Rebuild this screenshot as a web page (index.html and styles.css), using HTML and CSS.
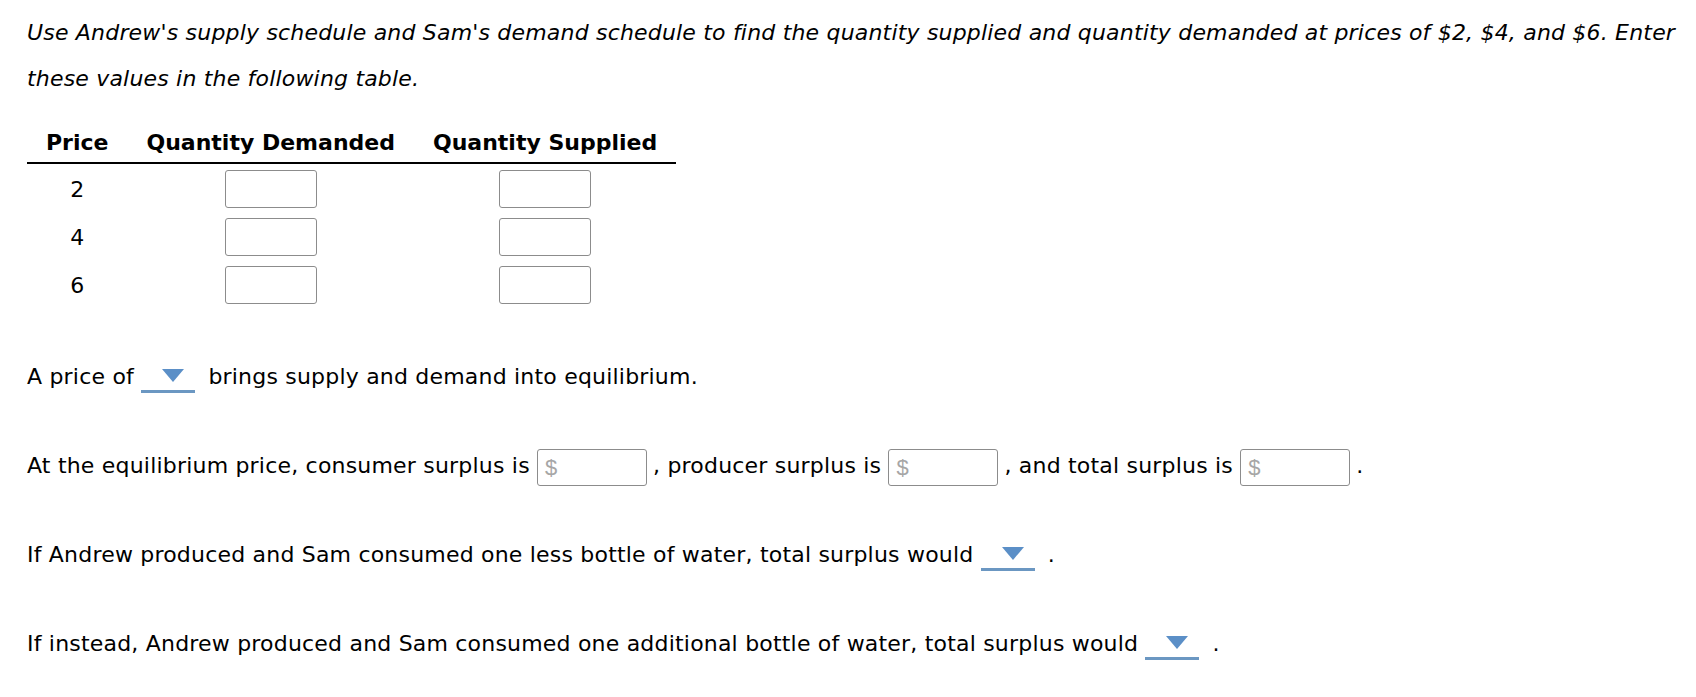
FILE: index.html
```html
<!DOCTYPE html>
<html lang="en">
<head>
<meta charset="utf-8">
<title>Supply and demand</title>
<link rel="stylesheet" href="styles.css">
</head>
<body>
<div class="page">
  <p class="intro">Use Andrew's supply schedule and Sam's demand schedule to find the quantity supplied and quantity demanded at prices of $2, $4, and $6. Enter these values in the following table.</p>

  <table class="schedule">
    <thead>
      <tr><th>Price</th><th>Quantity Demanded</th><th>Quantity Supplied</th></tr>
    </thead>
    <tbody>
      <tr><td>2</td><td><span class="box"></span></td><td><span class="box"></span></td></tr>
      <tr><td>4</td><td><span class="box"></span></td><td><span class="box"></span></td></tr>
      <tr><td>6</td><td><span class="box"></span></td><td><span class="box"></span></td></tr>
    </tbody>
  </table>

  <p class="q q-first">A price of <span class="dd"><span class="tri"></span></span> brings supply and demand into equilibrium.</p>

  <p class="q">At the equilibrium price, consumer surplus is <span class="money"><span class="cur">$</span></span>, producer surplus is <span class="money"><span class="cur">$</span></span>, and total surplus is <span class="money"><span class="cur">$</span></span>.</p>

  <p class="q">If Andrew produced and Sam consumed one less bottle of water, total surplus would <span class="dd"><span class="tri"></span></span> .</p>

  <p class="q">If instead, Andrew produced and Sam consumed one additional bottle of water, total surplus would <span class="dd"><span class="tri"></span></span> .</p>
</div>
</body>
</html>
```
FILE: styles.css
```css
html, body {
  margin: 0;
  padding: 0;
  background: #fff;
}
body {
  font-family: "DejaVu Sans", Verdana, sans-serif;
  font-size: 22px;
  color: #000;
}
.page {
  padding: 10px 0 0 27px;
}
.intro {
  margin: 0;
  font-style: italic;
  line-height: 46px;
  letter-spacing: 0.19px;
}
.schedule {
  margin-top: 22px;
  border-collapse: collapse;
}
.schedule th {
  font-weight: bold;
  padding: 0 19px;
  height: 38px;
  line-height: 38px;
  border-bottom: 2px solid #000;
  text-align: center;
  white-space: nowrap;
}
.schedule td {
  padding: 0 19px;
  height: 48px;
  text-align: center;
  vertical-align: middle;
}
.schedule tbody tr:first-child td {
  padding-top: 1px;
}
.box {
  display: inline-block;
  width: 90px;
  height: 36px;
  border: 1px solid #8c8c8c;
  border-radius: 3px;
  vertical-align: middle;
}
.q {
  margin: 43px 0 0;
  line-height: 46px;
  white-space: nowrap;
  letter-spacing: 0.2px;
}
.q-first {
  margin-top: 45px;
}
.dd {
  display: inline-block;
  position: relative;
  width: 54px;
  height: 29px;
  margin-right: 6px;
  vertical-align: middle;
  border-bottom: 3px solid #6b97c2;
  box-sizing: border-box;
}
.tri {
  position: absolute;
  left: 21px;
  top: 5px;
  width: 0;
  height: 0;
  border-left: 11px solid transparent;
  border-right: 11px solid transparent;
  border-top: 13px solid #5b8fc7;
}
.money {
  display: inline-block;
  width: 108px;
  height: 35px;
  margin-right: 6px;
  border: 1px solid #8c8c8c;
  border-radius: 3px;
  vertical-align: middle;
  line-height: 35px;
  letter-spacing: 0;
}
.cur {
  font-family: "Liberation Sans", Arial, sans-serif;
  color: #a6a6a6;
  padding-left: 7px;
  font-size: 22px;
}
```
